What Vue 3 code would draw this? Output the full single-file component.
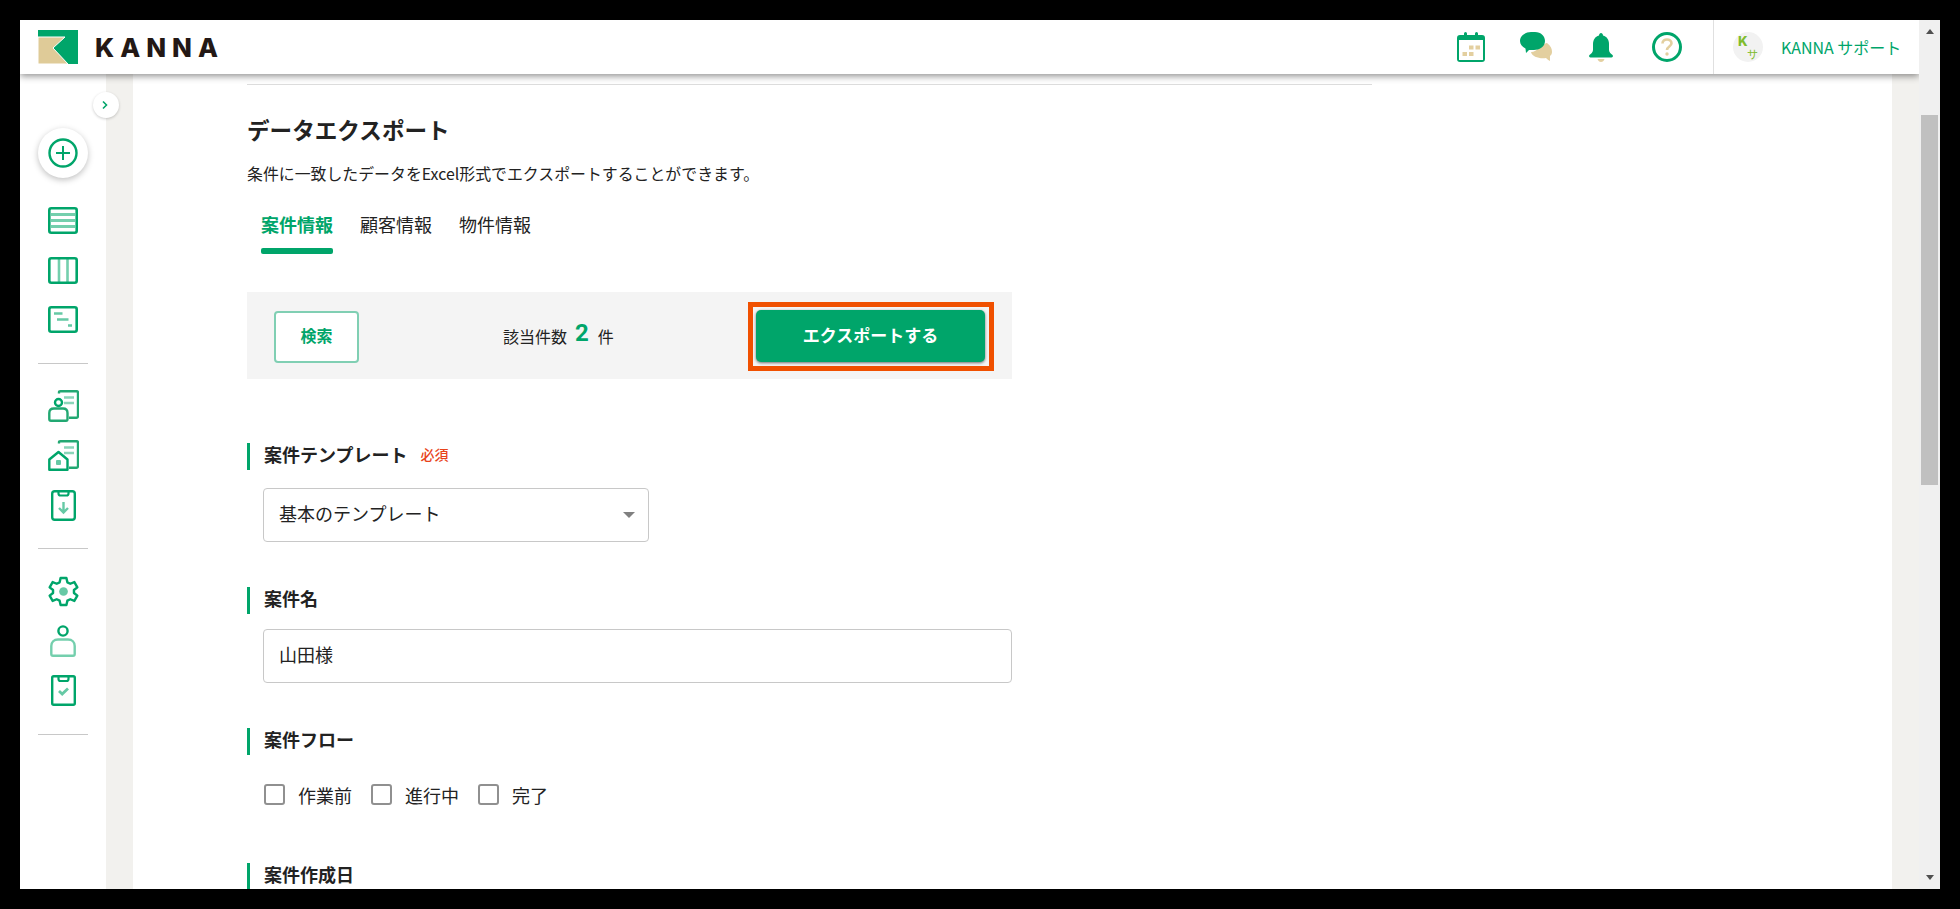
<script setup>
const flows = ['作業前', '進行中', '完了']
</script>

<template>
  <div class="frame">
    <div class="main">
      <header class="header">
        <div class="brand">
          <svg class="logo" viewBox="0 0 40 34">
            <rect width="40" height="34" fill="#00a56a" />
            <path d="M0 7H27L15 18L30 34H0Z" fill="#dfcb98" stroke="#fff" stroke-width="1" />
          </svg>
          <span class="brand-name">KANNA</span>
        </div>
        <div class="tools">
          <svg class="t-cal" viewBox="0 0 28 30">
            <path d="M3 3H7V1.500a1.500 1.500 0 0 1 3 0V3H18V1.500a1.500 1.500 0 0 1 3 0V3H25a3 3 0 0 1 3 3V27a3 3 0 0 1-3 3H3a3 3 0 0 1-3-3V6a3 3 0 0 1 3-3Z" fill="#00a56a" />
            <rect x="2" y="8" width="24" height="20" fill="#fff" />
            <g fill="#e3cf9f">
              <rect x="12" y="13.500" width="4.500" height="4" />
              <rect x="18.500" y="13.500" width="4.500" height="4" />
              <rect x="5.500" y="20" width="4.500" height="4" />
              <rect x="12" y="20" width="4.500" height="4" />
            </g>
          </svg>
          <svg class="t-chat" viewBox="0 0 33 30">
            <path d="M19 16C24 12 26 11 27 11C31 14 32 17 32 20C32 22 31 23 30 24L30 29C28 28 27 27 26 26C20 27 12 25 11 20C14 20 17 18 19 16Z" fill="#e3cf9f" />
            <path d="M11 0H15C21 0 25 4 25 9C25 15 19 18 14 18H9L6 21L5.500 16.500C2 15 0 12 0 9C0 4 5 0 11 0Z" fill="#00a56a" />
          </svg>
          <svg class="t-bell" viewBox="0 0 24 29">
            <path d="M12 0C13 0 14 1 14 2.500C18 3.500 20 7 20 11V17C20 19 22 21 23.500 22C24.300 22.700 24 24.500 22.500 24.500H1.500C0 24.500-.3 22.700 .5 22C2 21 4 19 4 17V11C4 7 6 3.500 10 2.500C10 1 11 0 12 0Z" fill="#00a56a" />
            <path d="M8.500 26H15.500C15 28 13.500 29 12 29S9 28 8.500 26Z" fill="#e3cf9f" />
          </svg>
          <svg class="t-help" viewBox="0 0 30 30">
            <circle cx="15" cy="15" r="13.500" fill="none" stroke="#00a56a" stroke-width="3" />
            <path d="M10.500 11.500C10.500 9 12.500 7.500 15 7.500S19.500 9 19.500 11.300C19.500 14.500 15 14.500 15 18" fill="none" stroke="#e3cf9f" stroke-width="2.600" />
            <circle cx="15" cy="22" r="1.700" fill="#e3cf9f" />
          </svg>
        </div>
        <div class="user">
          <div class="avatar"><span class="av-k">K</span><span class="av-s">サ</span></div>
          <span class="user-name">KANNA サポート</span>
        </div>
      </header>

      <div class="body">
        <aside class="side">
          <button class="toggle">
            <svg viewBox="0 0 8 10" width="8" height="10"><path d="M2 1.500L5.500 5L2 8.500" fill="none" stroke="#00a56a" stroke-width="1.600" /></svg>
          </button>
          <div class="add">
            <svg viewBox="0 0 30 30" width="30" height="30">
              <circle cx="15" cy="15" r="13.500" fill="none" stroke="#00a56a" stroke-width="2.400" />
              <path d="M15 8V22M8 15H22" stroke="#00a56a" stroke-width="2" />
            </svg>
          </div>
          <div class="group">
            <div class="slot">
              <svg viewBox="0 0 30 27" width="30" height="27">
                <path d="M3 7.500H27M3 13.500H27M3 19.500H27" stroke="#74cfad" stroke-width="3" />
                <rect x="1.300" y="1.300" width="27.400" height="24.400" rx="2" fill="none" stroke="#00a56a" stroke-width="2.600" />
              </svg>
            </div>
            <div class="slot">
              <svg viewBox="0 0 30 27" width="30" height="27">
                <path d="M11 2V25M19.500 2V25" stroke="#74cfad" stroke-width="2.600" />
                <rect x="1.300" y="1.300" width="27.400" height="24.400" rx="2" fill="none" stroke="#00a56a" stroke-width="2.600" />
              </svg>
            </div>
            <div class="slot">
              <svg viewBox="0 0 30 27" width="30" height="27">
                <path d="M6 7.500H14.500M9 13.500H20.500M20 19.500H24" stroke="#66c9a5" stroke-width="2.600" />
                <rect x="1.300" y="1.300" width="27.400" height="24.400" rx="2" fill="none" stroke="#00a56a" stroke-width="2.600" />
              </svg>
            </div>
          </div>
          <hr class="rule" />
          <div class="group">
            <div class="slot">
              <svg viewBox="0 0 31 32" width="31" height="32">
                <path d="M11 3.500V2.500C11 1.700 11.700 1.300 12.500 1.300H28.500C29.300 1.300 30 2 30 2.800V26C30 27 29.300 27.700 28.500 27.700H21" fill="none" stroke="#22a872" stroke-width="2.400" />
                <path d="M16 7.500H26M16 13H26" stroke="#8bd5b9" stroke-width="2.600" />
                <circle cx="10.500" cy="12.500" r="3.500" fill="none" stroke="#00a56a" stroke-width="2.400" />
                <path d="M1.300 29V23C1.300 20 3.500 18.500 6 18.500H15C17.500 18.500 19.500 20 19.500 23V29C19.500 30 19 30.700 18 30.700H3C2 30.700 1.300 30 1.300 29Z" fill="none" stroke="#22a872" stroke-width="2.400" />
              </svg>
            </div>
            <div class="slot">
              <svg viewBox="0 0 31 31" width="31" height="31">
                <path d="M11 3.500V2.500C11 1.700 11.700 1.300 12.500 1.300H28.500C29.300 1.300 30 2 30 2.800V26C30 27 29.300 27.700 28.500 27.700H21" fill="none" stroke="#22a872" stroke-width="2.400" />
                <path d="M16 7.500H26M16 13H26" stroke="#8bd5b9" stroke-width="2.600" />
                <path d="M1.300 29.700V19.500L10.500 12L19.500 19.500V29.700Z" fill="none" stroke="#00a56a" stroke-width="2.400" stroke-linejoin="round" />
                <rect x="8" y="20" width="5" height="5" rx="1" fill="#66c9a5" />
              </svg>
            </div>
            <div class="slot">
              <svg viewBox="0 0 25 31" width="25" height="31">
                <rect x="1.200" y="1.200" width="22.600" height="28.600" rx="2.500" fill="none" stroke="#00a56a" stroke-width="2.400" />
                <path d="M7.500 1.500V3.500C7.500 5 8.500 5.500 9.500 5.500H15.500C16.500 5.500 17.500 5 17.500 3.500V1.500" fill="none" stroke="#00a56a" stroke-width="2.200" />
                <path d="M12.500 12V22M8 18L12.500 22.500L17 18" fill="none" stroke="#66c9a5" stroke-width="2.400" />
              </svg>
            </div>
          </div>
          <hr class="rule" />
          <div class="group">
            <div class="slot">
              <svg viewBox="0 0 32 32" width="31" height="31">
                <path d="M13 2H19L20 6.500L23 8L27.200 6.300L30.300 11.700L26.800 14.500V17.500L30.300 20.300L27.200 25.700L23 24L20 25.500L19 30H13L12 25.500L9 24L4.800 25.700L1.700 20.300L5.200 17.500V14.500L1.700 11.700L4.800 6.300L9 8L12 6.500Z" fill="none" stroke="#00a56a" stroke-width="2.500" stroke-linejoin="round" />
                <circle cx="16" cy="16" r="4.500" fill="#66c9a5" />
              </svg>
            </div>
            <div class="slot">
              <svg viewBox="0 0 26 32" width="26" height="32">
                <circle cx="13" cy="6" r="4.600" fill="none" stroke="#00a56a" stroke-width="2.400" />
                <path d="M1.300 29V21C1.300 17 4 14.500 8 14.500H18C22 14.500 24.700 17 24.700 21V29C24.700 30 24 30.700 23 30.700H3C2 30.700 1.300 30 1.300 29Z" fill="none" stroke="#74cfad" stroke-width="2.400" />
              </svg>
            </div>
            <div class="slot">
              <svg viewBox="0 0 25 31" width="25" height="31">
                <rect x="1.200" y="1.200" width="22.600" height="28.600" rx="1.500" fill="none" stroke="#00a56a" stroke-width="2.400" />
                <path d="M7.500 1.500V4C7.500 5.500 8.500 6 9.500 6H15.500C16.500 6 17.500 5.500 17.500 4V1.500" fill="none" stroke="#00a56a" stroke-width="2.200" />
                <path d="M8 16L11.200 19L17 13.500" fill="none" stroke="#66c9a5" stroke-width="2.800" />
              </svg>
            </div>
          </div>
          <hr class="rule" />
        </aside>

        <div class="gutter"></div>

        <main class="content">
          <div class="inner">
            <hr class="top-rule" />
            <h1 class="title">データエクスポート</h1>
            <p class="desc">条件に一致したデータをExcel形式でエクスポートすることができます。</p>
            <nav class="tabs">
              <a class="tab active">案件情報</a>
              <a class="tab">顧客情報</a>
              <a class="tab">物件情報</a>
            </nav>
            <div class="panel">
              <button class="search">検索</button>
              <div class="count">該当件数<b>2</b>件</div>
              <div class="focus">
                <button class="export">エクスポートする</button>
              </div>
            </div>

            <section class="field first">
              <h2 class="label">案件テンプレート<span class="req">必須</span></h2>
              <div class="select">基本のテンプレート<i class="caret"></i></div>
            </section>

            <section class="field">
              <h2 class="label">案件名</h2>
              <div class="input">山田様</div>
            </section>

            <section class="field">
              <h2 class="label">案件フロー</h2>
              <div class="checks">
                <label v-for="f in flows" :key="f" class="check"><i class="box"></i>{{ f }}</label>
              </div>
            </section>

            <section class="field last">
              <h2 class="label">案件作成日</h2>
            </section>
          </div>
        </main>

        <div class="gutter right"></div>
      </div>
    </div>

    <div class="scrollbar">
      <i class="arrow up"></i>
      <div class="thumb"></div>
      <i class="arrow down"></i>
    </div>
  </div>
</template>

<style>
html, body { margin: 0; background: #000; overflow: hidden; }
</style>

<style scoped>
* { box-sizing: border-box; }
.frame {
  width: 1960px;
  height: 909px;
  padding: 20px;
  background: #000;
  display: flex;
  overflow: hidden;
  font-family: "Noto Sans CJK JP", "Noto Sans", sans-serif;
  color: #222;
}
.main { width: 1899px; height: 869px; display: flex; flex-direction: column; background: #fff; overflow: hidden; }

.header {
  height: 54px;
  flex: none;
  display: flex;
  align-items: center;
  background: #fff;
  box-shadow: 0 2px 7px rgba(0, 0, 0, .45);
  position: relative;
  z-index: 3;
}
.brand { display: flex; align-items: center; padding-left: 18px; }
.logo { width: 40px; height: 34px; display: block; }
.brand-name {
  margin-left: 17px;
  margin-top: 1px;
  font-family: Inter, sans-serif;
  font-weight: 800;
  font-size: 26px;
  letter-spacing: 6px;
  color: #231815;
  line-height: 1;
}
.tools { margin-left: auto; display: flex; align-items: center; height: 100%; }
.t-cal { width: 28px; height: 30px; margin-right: 35px; }
.t-chat { width: 33px; height: 30px; margin-right: 36px; }
.t-bell { width: 24px; height: 29px; margin-right: 39px; }
.t-help { width: 30px; height: 30px; margin-right: 31px; }
.user { width: 206px; height: 100%; border-left: 1px solid #e0e0e0; display: flex; align-items: center; padding-left: 19px; }
.avatar { width: 30px; height: 30px; border-radius: 50%; background: #f2f2f2; display: flex; flex-direction: column; color: #7fbc2e; padding: 4px 6px 0 5px; }
.av-k { font-size: 13px; font-weight: 800; line-height: 10px; font-family: Inter, sans-serif; }
.av-s { font-size: 11px; line-height: 12px; margin-top: 2px; align-self: flex-end; margin-right: -1px; }
.user-name { margin-left: 18px; font-size: 16px; color: #00a56a; white-space: nowrap; line-height: 1; }

.body { flex: 1; display: flex; min-height: 0; }
.side { width: 86px; flex: none; background: #fff; display: flex; flex-direction: column; align-items: center; position: relative; z-index: 2; }
.toggle {
  position: absolute;
  left: 73px;
  top: 18px;
  width: 26px;
  height: 26px;
  padding: 0 2px 0 0;
  border: 0;
  border-radius: 50%;
  background: #fff;
  box-shadow: 0 1px 3px rgba(0, 0, 0, .2);
  display: flex;
  align-items: center;
  justify-content: center;
}
.add {
  width: 50px;
  height: 50px;
  margin-top: 54px;
  margin-bottom: 18px;
  border-radius: 50%;
  background: #fff;
  box-shadow: 0 2px 6px rgba(0, 0, 0, .25);
  display: flex;
  align-items: center;
  justify-content: center;
}
.group { display: flex; flex-direction: column; align-items: center; }
.slot { height: 49.500px; display: flex; align-items: center; justify-content: center; }
.slot svg { display: block; }
.rule { width: 50px; height: 1px; margin: 18px 0; border: 0; background: #c8c8c8; flex: none; }

.gutter { width: 27px; flex: none; background: #f2f1ee; }
.content { flex: 1; background: #fff; overflow: hidden; min-width: 0; }
.inner { width: 1125px; margin-left: 114px; padding-top: 10px; }
.top-rule { width: 100%; height: 1px; margin: 0; border: 0; background: #dcdcdc; }
.title { margin: 29px 0 0; font-size: 22.600px; font-weight: 700; line-height: 32px; color: #222; }
.desc { margin: 16px 0 0; font-size: 15.900px; line-height: 24px; }
.tabs { display: flex; margin: 20px 0 0 14px; }
.tab { width: 72px; margin-right: 27px; font-size: 18px; line-height: 26px; padding-top: 5px; padding-bottom: 12px; height: 47px; white-space: nowrap; position: relative; }
.tab.active { color: #00a56a; font-weight: 700; }
.tab.active::after { content: ""; position: absolute; left: 0; right: 0; bottom: -1px; height: 6px; border-radius: 2px; background: #00a56a; }
.panel { width: 765px; height: 87px; margin-top: 39px; background: #f4f4f4; display: flex; align-items: center; padding: 2px 18px 0 27px; }
.search { width: 85px; height: 52px; border: 2px solid #80cfb3; border-radius: 4px; background: #fff; color: #00a56a; font: 700 16px "Noto Sans CJK JP", sans-serif; padding: 0 0 3px; }
.count { margin: -2px 0 0 144px; font-size: 16px; display: flex; align-items: center; line-height: 24px; }
.count b { margin: -6px 9px 0 8px; font-family: Roboto, sans-serif; font-size: 24px; font-weight: 700; color: #00a56a; }
.focus { margin-left: auto; border: 5px solid #f05000; padding: 3px 4px 4px 3px; width: 246px; height: 69px; background: #f4f4f4; }
.export { width: 100%; height: 100%; border: 0; border-radius: 5px; background: #00a56a; color: #fff; font: 700 17px "Noto Sans CJK JP", sans-serif; box-shadow: 0 1px 3px rgba(0, 0, 0, .55); padding: 0 0 3px; }

.field { margin-top: 45px; }
.field.first { margin-top: 64px; }
.field.last { margin-top: 58px; }
.label { margin: 0; height: 27px; border-left: 3px solid #00a56a; padding: 0 0 4px 14px; font-size: 18px; font-weight: 700; line-height: 25px; display: flex; align-items: center; color: #222; }
.req { margin-left: 13px; font-size: 14px; color: #e8431a; font-weight: 500; }
.select, .input { display: flex; align-items: center; height: 54px; margin-left: 16px; padding: 0 15px 5px; border: 1px solid #c8c8c8; border-radius: 4px; font-size: 18px; background: #fff; }
.select { width: 386px; margin-top: 18px; justify-content: space-between; padding-right: 13px; }
.input { width: 749px; margin-top: 15px; }
.caret { width: 0; height: 0; margin-top: 5px; border-left: 6px solid transparent; border-right: 6px solid transparent; border-top: 6px solid #808080; }
.checks { display: flex; margin: 29px 0 0 17px; }
.check { display: flex; align-items: center; font-size: 18px; height: 21px; margin-right: 19px; line-height: 1; white-space: nowrap; }
.box { width: 21px; height: 21px; margin-right: 13px; border: 2px solid #909090; border-radius: 3px; background: #fff; flex: none; }

.scrollbar { width: 21px; height: 869px; background: #f0f0f0; position: relative; display: flex; flex-direction: column; align-items: center; padding-top: 9px; }
.arrow { width: 0; height: 0; border-left: 4.500px solid transparent; border-right: 4.500px solid transparent; flex: none; }
.arrow.up { border-bottom: 5px solid #505050; }
.arrow.down { border-top: 5px solid #505050; margin-top: 390px; }
.thumb { width: 17px; height: 370px; margin-top: 81px; background: #c0c0c0; flex: none; }
</style>
